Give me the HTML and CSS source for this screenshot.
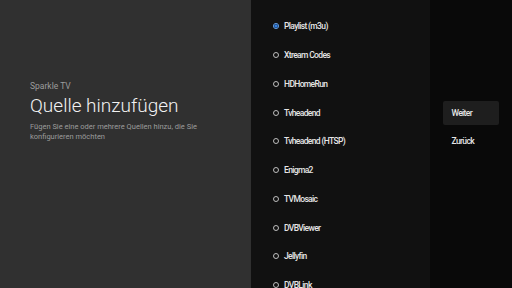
FILE: index.html
```html
<!DOCTYPE html>
<html lang="de">
<head>
  <meta charset="UTF-8" />
  <meta name="viewport" content="width=device-width, initial-scale=1.0" />
  <title>Sparkle TV – Quelle hinzufügen</title>
  <link rel="stylesheet" href="styles.css">
</head>
<body>
  <main class="screen">
    <!-- Guidance -->
    <section class="guidance">
      <div class="breadcrumb">Sparkle TV</div>
      <h1 class="title">Quelle hinzufügen</h1>
      <p class="desc">Fügen Sie eine oder mehrere Quellen hinzu, die Sie konfigurieren möchten</p>
    </section>

    <!-- Source list -->
    <section class="sources">
      <ul class="radio-list">
        <li class="radio-row checked">
          <svg class="radio" viewBox="0 0 8 8"><circle cx="4" cy="4" r="2.6" fill="none" stroke="#6aa8f2" stroke-width="0.9"/><circle cx="4" cy="4" r="1.8" fill="#2f7fe6"/></svg>
          <span>Playlist (m3u)</span>
        </li>
        <li class="radio-row"><svg class="radio" viewBox="0 0 8 8"><circle cx="4" cy="4" r="2.5" fill="none" stroke="#cfcfcf" stroke-width="0.9"/></svg><span>Xtream Codes</span></li>
        <li class="radio-row"><svg class="radio" viewBox="0 0 8 8"><circle cx="4" cy="4" r="2.5" fill="none" stroke="#cfcfcf" stroke-width="0.9"/></svg><span>HDHomeRun</span></li>
        <li class="radio-row"><svg class="radio" viewBox="0 0 8 8"><circle cx="4" cy="4" r="2.5" fill="none" stroke="#cfcfcf" stroke-width="0.9"/></svg><span>Tvheadend</span></li>
        <li class="radio-row"><svg class="radio" viewBox="0 0 8 8"><circle cx="4" cy="4" r="2.5" fill="none" stroke="#cfcfcf" stroke-width="0.9"/></svg><span>Tvheadend (HTSP)</span></li>
        <li class="radio-row"><svg class="radio" viewBox="0 0 8 8"><circle cx="4" cy="4" r="2.5" fill="none" stroke="#cfcfcf" stroke-width="0.9"/></svg><span>Enigma2</span></li>
        <li class="radio-row"><svg class="radio" viewBox="0 0 8 8"><circle cx="4" cy="4" r="2.5" fill="none" stroke="#cfcfcf" stroke-width="0.9"/></svg><span>TVMosaic</span></li>
        <li class="radio-row"><svg class="radio" viewBox="0 0 8 8"><circle cx="4" cy="4" r="2.5" fill="none" stroke="#cfcfcf" stroke-width="0.9"/></svg><span>DVBViewer</span></li>
        <li class="radio-row"><svg class="radio" viewBox="0 0 8 8"><circle cx="4" cy="4" r="2.5" fill="none" stroke="#cfcfcf" stroke-width="0.9"/></svg><span>Jellyfin</span></li>
        <li class="radio-row"><svg class="radio" viewBox="0 0 8 8"><circle cx="4" cy="4" r="2.5" fill="none" stroke="#cfcfcf" stroke-width="0.9"/></svg><span>DVBLink</span></li>
      </ul>
    </section>

    <!-- Actions -->
    <section class="actions">
      <button class="action focused">Weiter</button>
      <button class="action">Zurück</button>
    </section>
  </main>
</body>
</html>
```

FILE: styles.css
```css
:root {
  --guide-bg: #303030;
  --list-bg: #111111;
  --action-bg: #090909;
  --focus-bg: #1e1e1e;
  --text: #e6e6e6;
  --muted: #9c9c9c;
}
* { box-sizing: border-box; margin: 0; padding: 0; }
html, body { width: 512px; height: 288px; overflow: hidden; }
body { background: var(--guide-bg); color: var(--text); font-family: Roboto, 'Noto Sans', sans-serif; }

.screen { display: flex; height: 288px; }

/* Guidance */
.guidance {
  width: 251px;
  flex: none;
  background: var(--guide-bg);
  padding: 81px 50px 0 30px;
}
.breadcrumb { font-size: 8.5px; line-height: 11px; color: var(--muted); }
.title {
  margin-top: 2px;
  font-size: 19px;
  line-height: 24px;
  font-weight: 300;
  color: #f2f2f2;
}
.desc {
  margin-top: 3.5px;
  font-size: 7.5px;
  line-height: 10px;
  color: var(--muted);
}

/* Source list */
.sources {
  width: 179px;
  flex: none;
  background: var(--list-bg);
  overflow: hidden;
}
.radio-list { list-style: none; padding-top: 12px; }
.radio-row {
  height: 28.75px;
  display: flex;
  align-items: center;
  padding-left: 21px;
  font-size: 8.5px;
  font-weight: 500;
  letter-spacing: -0.65px;
  color: var(--text);
}
.radio { width: 8px; height: 8px; flex: none; margin-right: 4px; }

/* Actions */
.actions {
  flex: 1;
  background: var(--action-bg);
  display: flex;
  flex-direction: column;
  gap: 4.5px;
  padding: 100.5px 13px 0 13px;
}
.action {
  height: 24.3px;
  border: none;
  border-radius: 2px;
  background: transparent;
  color: var(--text);
  text-align: left;
  padding-left: 8.5px;
  font-family: Roboto, 'Noto Sans', sans-serif;
  font-size: 8.5px;
  font-weight: 500;
  letter-spacing: -0.65px;
}
.action.focused { background: var(--focus-bg); }
```
